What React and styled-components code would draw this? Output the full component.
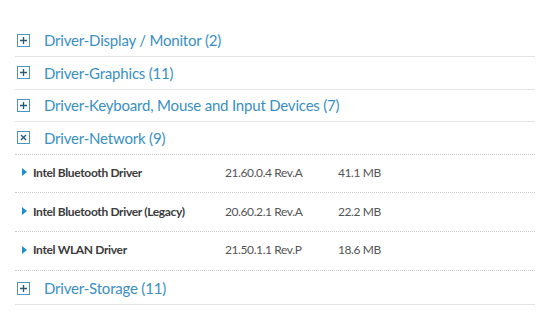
import styled, { createGlobalStyle } from "styled-components";

const GlobalStyle = createGlobalStyle`
  html, body {
    margin: 0;
    padding: 0;
    background: #fff;
  }
  body {
    font-family: Lato, "Open Sans", sans-serif;
  }
`;

const categories = [
    { name: "Driver-Display / Monitor", count: 2 },
    { name: "Driver-Graphics", count: 11 },
    { name: "Driver-Keyboard, Mouse and Input Devices", count: 7 },
    {
        name: "Driver-Network",
        count: 9,
        open: true,
        drivers: [
            { name: "Intel Bluetooth Driver", version: "21.60.0.4 Rev.A", size: "41.1 MB" },
            { name: "Intel Bluetooth Driver (Legacy)", version: "20.60.2.1 Rev.A", size: "22.2 MB" },
            { name: "Intel WLAN Driver", version: "21.50.1.1 Rev.P", size: "18.6 MB" },
        ],
    },
    { name: "Driver-Storage", count: 11 },
];

const Page = styled.section`
  width: 520px;
  margin: 0 0 0 15px;
  padding-top: 24.5px;
`;
const CategoryHeader = styled.div`
  display: flex;
  align-items: center;
  gap: 14px;
  height: 31.5px;
  padding-left: 2px;
  border-bottom: ${(p) => (p.$open ? "1px dotted #c9c9c9" : "1.5px solid #e3e3e3")};
  color: #3a8fc2;
  font-size: 15px;
  letter-spacing: -0.2px;
  cursor: pointer;
`;
const ToggleBox = styled.span`
  box-sizing: border-box;
  width: 13px;
  height: 13px;
  border: 1px solid #4a95c4;
  display: flex;
  align-items: center;
  justify-content: center;
`;
const DriverList = styled.div`
  padding-bottom: 2px;
`;
const DriverRow = styled.div`
  display: grid;
  grid-template-columns: 203px 113px 1fr;
  align-items: center;
  height: 35.7px;
  padding: 0 0 2px 7px;
  border-bottom: 1px dotted #c9c9c9;
  font-size: 12px;
  letter-spacing: -0.35px;
`;
const DriverName = styled.span`
  display: flex;
  align-items: center;
  gap: 6px;
  font-weight: bold;
  color: #3b3b3b;
  &::before {
    content: "";
    width: 0;
    height: 0;
    border-top: 4px solid transparent;
    border-bottom: 4px solid transparent;
    border-left: 5px solid #1f8fd0;
  }
`;
const DriverMeta = styled.span`
  color: #555;
  letter-spacing: -0.4px;
`;

const PlusIcon = () => (
    <svg width="9" height="9" viewBox="0 0 9 9">
        <path d="M4.5 1v7M1 4.5h7" stroke="#24597c" strokeWidth="1.3" />
    </svg>
);
const CloseIcon = () => (
    <svg width="9" height="9" viewBox="0 0 9 9">
        <path d="M2 2l5 5M7 2l-5 5" stroke="#24597c" strokeWidth="1.3" />
    </svg>
);

const App = () => (
    <>
        <GlobalStyle />
        <Page>
            {categories.map((c) => (
                <div key={c.name}>
                    <CategoryHeader $open={c.open}>
                        <ToggleBox>{c.open ? <CloseIcon /> : <PlusIcon />}</ToggleBox>
                        <span>{c.name} ({c.count})</span>
                    </CategoryHeader>
                    {c.open && (
                        <DriverList>
                            {c.drivers.map((d) => (
                                <DriverRow key={d.name}>
                                    <DriverName>{d.name}</DriverName>
                                    <DriverMeta>{d.version}</DriverMeta>
                                    <DriverMeta>{d.size}</DriverMeta>
                                </DriverRow>
                            ))}
                        </DriverList>
                    )}
                </div>
            ))}
        </Page>
    </>
);
export default App;
